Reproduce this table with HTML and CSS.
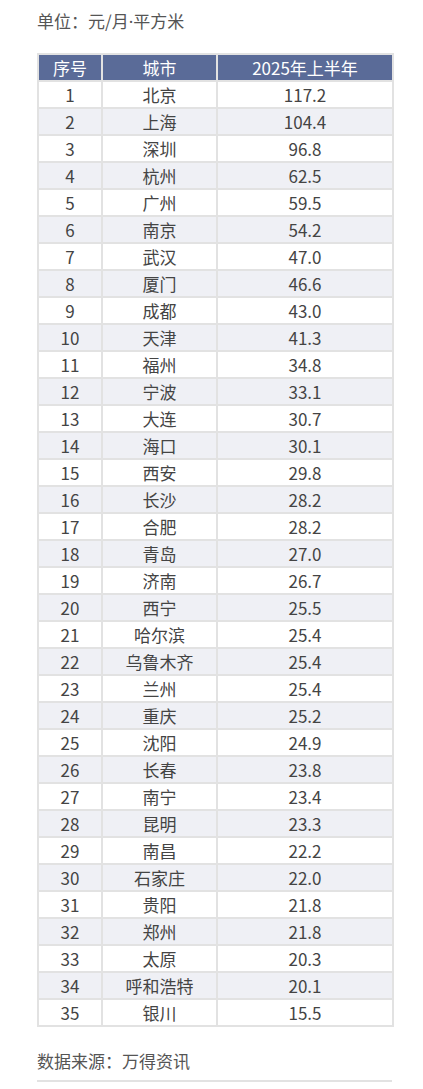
FILE: index.html
```html
<!DOCTYPE html>
<html lang="zh-CN">
<head>
<meta charset="utf-8">
<title>城市租金</title>
<link rel="stylesheet" href="styles.css">
</head>
<body>
<div class="page">
  <p class="unit">单位：元/月<span class="dot">·</span>平方米</p>
  <table class="data">
    <colgroup><col class="c1"><col class="c2"><col class="c3"></colgroup>
    <thead>
      <tr><th>序号</th><th>城市</th><th>2025年上半年</th></tr>
    </thead>
    <tbody>
      <tr><td>1</td><td>北京</td><td>117.2</td></tr>
      <tr><td>2</td><td>上海</td><td>104.4</td></tr>
      <tr><td>3</td><td>深圳</td><td>96.8</td></tr>
      <tr><td>4</td><td>杭州</td><td>62.5</td></tr>
      <tr><td>5</td><td>广州</td><td>59.5</td></tr>
      <tr><td>6</td><td>南京</td><td>54.2</td></tr>
      <tr><td>7</td><td>武汉</td><td>47.0</td></tr>
      <tr><td>8</td><td>厦门</td><td>46.6</td></tr>
      <tr><td>9</td><td>成都</td><td>43.0</td></tr>
      <tr><td>10</td><td>天津</td><td>41.3</td></tr>
      <tr><td>11</td><td>福州</td><td>34.8</td></tr>
      <tr><td>12</td><td>宁波</td><td>33.1</td></tr>
      <tr><td>13</td><td>大连</td><td>30.7</td></tr>
      <tr><td>14</td><td>海口</td><td>30.1</td></tr>
      <tr><td>15</td><td>西安</td><td>29.8</td></tr>
      <tr><td>16</td><td>长沙</td><td>28.2</td></tr>
      <tr><td>17</td><td>合肥</td><td>28.2</td></tr>
      <tr><td>18</td><td>青岛</td><td>27.0</td></tr>
      <tr><td>19</td><td>济南</td><td>26.7</td></tr>
      <tr><td>20</td><td>西宁</td><td>25.5</td></tr>
      <tr><td>21</td><td>哈尔滨</td><td>25.4</td></tr>
      <tr><td>22</td><td>乌鲁木齐</td><td>25.4</td></tr>
      <tr><td>23</td><td>兰州</td><td>25.4</td></tr>
      <tr><td>24</td><td>重庆</td><td>25.2</td></tr>
      <tr><td>25</td><td>沈阳</td><td>24.9</td></tr>
      <tr><td>26</td><td>长春</td><td>23.8</td></tr>
      <tr><td>27</td><td>南宁</td><td>23.4</td></tr>
      <tr><td>28</td><td>昆明</td><td>23.3</td></tr>
      <tr><td>29</td><td>南昌</td><td>22.2</td></tr>
      <tr><td>30</td><td>石家庄</td><td>22.0</td></tr>
      <tr><td>31</td><td>贵阳</td><td>21.8</td></tr>
      <tr><td>32</td><td>郑州</td><td>21.8</td></tr>
      <tr><td>33</td><td>太原</td><td>20.3</td></tr>
      <tr><td>34</td><td>呼和浩特</td><td>20.1</td></tr>
      <tr><td>35</td><td>银川</td><td>15.5</td></tr>
    </tbody>
  </table>
  <p class="source">数据来源：万得资讯</p>
  <div class="rule"></div>
</div>
</body>
</html>
```

FILE: styles.css
```css
html, body {
  margin: 0;
  padding: 0;
  background: #ffffff;
}
body {
  font-family: "Noto Sans CJK SC", "Noto Sans", sans-serif;
  color: #444444;
}
.page {
  width: 355px;
  padding: 0 0 0 37px;
}
.unit {
  margin: 9px 0 0 0;
  font-size: 17px;
  line-height: 24px;
  color: #555555;
}
.dot {
  font-family: "Noto Sans", "DejaVu Sans", sans-serif;
}
.data {
  margin-top: 19px;
  width: 355px;
  border-collapse: collapse;
  table-layout: fixed;
  font-size: 17px;
}
.c1 { width: 64px; }
.c2 { width: 115px; }
.c3 { width: 176px; }
.data th,
.data td {
  border: 2px solid #e2e2e2;
  height: 25px;
  padding: 0;
  text-align: center;
  line-height: 25px;
  font-weight: normal;
}
.data th {
  background: #5a6b98;
  color: #ffffff;
}
.data td {
  color: #444444;
}
.data tbody tr:nth-child(even) td {
  background: #eff0f5;
}
.source {
  margin: 22px 0 0 0;
  font-size: 17px;
  line-height: 24px;
  color: #555555;
}
.rule {
  margin-top: 7px;
  height: 2px;
  width: 355px;
  background: #e2e2e2;
}
```
